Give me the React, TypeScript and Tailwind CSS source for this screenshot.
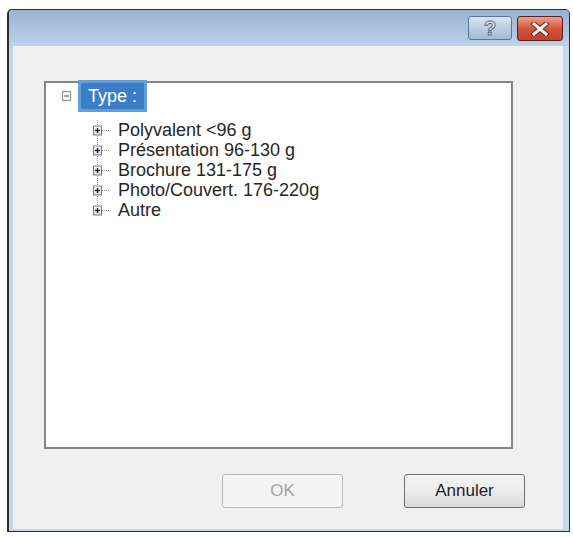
import React from 'react';

const items = [
  'Polyvalent <96 g',
  'Présentation 96-130 g',
  'Brochure 131-175 g',
  'Photo/Couvert. 176-220g',
  'Autre',
];

function Expander({ last }: { last: boolean }) {
  return (
    <svg width="16" height="20" viewBox="0 0 16 20" className="shrink-0">
      <line x1="4.5" y1="0" x2="4.5" y2={last ? 10 : 20} stroke="#8a8a8a" strokeDasharray="1 1" />
      <line x1="9" y1="10.5" x2="16" y2="10.5" stroke="#8a8a8a" strokeDasharray="1 1" />
      <defs>
        <linearGradient id="pg" x1="0" y1="0" x2="0" y2="1">
          <stop offset="0" stopColor="#ffffff" />
          <stop offset="1" stopColor="#d8d8d8" />
        </linearGradient>
      </defs>
      <rect x="0.5" y="6" width="8" height="9" fill="url(#pg)" stroke="#7f8080" />
      <line x1="2" y1="10.5" x2="7" y2="10.5" stroke="#0f2440" strokeWidth="1.3" />
      <line x1="4.5" y1="8" x2="4.5" y2="13" stroke="#0f2440" strokeWidth="1.3" />
    </svg>
  );
}

function TitleButtons() {
  return (
    <div className="flex items-start gap-[5px] pt-[6px] pr-[6px]">
      <div className="w-[44px] h-[24px] rounded-[3px] border border-[#5d7594] bg-gradient-to-b from-[#d9e4f0] via-[#bccee3] to-[#a3bad6] flex items-center justify-center">
        <span className="font-['Liberation_Sans',sans-serif] font-bold text-[20px] leading-none text-[#eef2f7] [-webkit-text-stroke:1px_#5a677a]">?</span>
      </div>
      <div className="w-[46px] h-[25px] rounded-[3px] border border-[#5b2017] bg-gradient-to-b from-[#ea9f8c] via-[#d4553d] to-[#c0402a] flex items-center justify-center">
        <svg width="20" height="14" viewBox="0 0 20 14">
          <path d="M4 2 L16 12 M16 2 L4 12" stroke="#5a2a22" strokeWidth="5" strokeLinecap="square" />
          <path d="M4 2 L16 12 M16 2 L4 12" stroke="#f4f0ee" strokeWidth="3" strokeLinecap="square" />
        </svg>
      </div>
    </div>
  );
}

export default function App() {
  return (
    <div className="w-[573px] h-[537px] bg-white pl-[7px] pt-[9px] font-['Liberation_Sans',sans-serif]">
      <div className="w-[563px] h-[523px] border border-[#2b2b2b] border-l-2 rounded-t-[5px] bg-[#c4d7ec] flex flex-col">
        {/* title bar */}
        <div className="h-[36px] shrink-0 rounded-t-[4px] bg-gradient-to-b from-[#98b3d4] to-[#bdd1ea] flex justify-end">
          <TitleButtons />
        </div>

        {/* body */}
        <div className="flex-1 flex pl-[4px] pr-[6px] pb-[2px]">
          <div className="flex-1 bg-[#f0f0f0] flex flex-col">
            <div className="mt-[35px] ml-[31px] w-[469px] h-[368px] border-2 border-[#858585] bg-white">
              <div className="flex items-center h-[32px] -mt-[3px]">
                <svg width="9" height="10" viewBox="0 0 9 10" className="ml-[16px] shrink-0">
                  <rect x="0.5" y="0.5" width="8" height="9" fill="#f7f7f7" stroke="#8e8f8f" />
                  <line x1="2" y1="5" x2="7" y2="5" stroke="#4a4a4a" />
                </svg>
                <div className="ml-[7px] h-[32px] border-[3px] border-[#63a0da] bg-[#3b7dc6] flex items-center px-[7px]">
                  <span className="text-white text-[18px] leading-none">Type :</span>
                </div>
              </div>
              <div className="flex flex-col mt-[8px]">
                {items.map((t, i) => (
                  <div key={t} className="flex items-center h-[20px] pl-[47px]">
                    <Expander last={i === items.length - 1} />
                    <span className="ml-[9px] text-[18px] leading-none text-[#262626] whitespace-nowrap">{t}</span>
                  </div>
                ))}
              </div>
            </div>

            <div className="mt-[25px] ml-[209px] flex gap-[61px]">
              <div className="w-[121px] h-[34px] rounded-[3px] border border-[#b9b9b9] bg-[#f4f4f4] flex items-center justify-center text-[17px] text-[#a3a3a3]">
                OK
              </div>
              <div className="w-[121px] h-[34px] rounded-[3px] border border-[#707070] bg-gradient-to-b from-[#f4f4f4] via-[#ececec] to-[#d9d9d9] flex items-center justify-center text-[17px] text-[#1e1e1e]">
                Annuler
              </div>
            </div>
          </div>
        </div>
      </div>
    </div>
  );
}
